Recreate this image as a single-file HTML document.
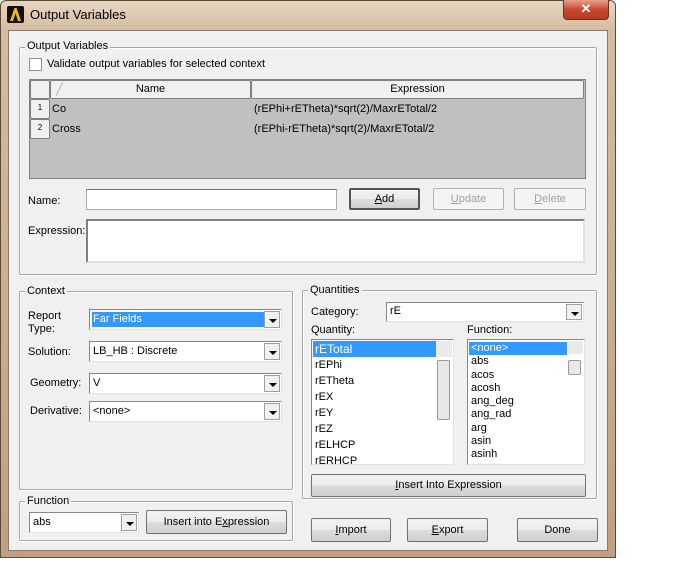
<!DOCTYPE html>
<html><head><style>
*{box-sizing:border-box}
body{margin:0;width:697px;height:561px;background:#fff;position:relative;overflow:hidden;font-family:"Liberation Sans",sans-serif;font-size:11px;color:#000}
.a{position:absolute}
.frame{left:0;top:0;width:616px;height:558px;border:1px solid #5a4a3a;border-radius:6px 6px 0 0;background:linear-gradient(180deg,#e6d6c2 0,#d4bca0 30px,#c0a080 100%)}
.client{left:8px;top:30px;width:600px;height:521px;background:#f0f0f0;border:1px solid #8a7a6a}
.grp{border:1px solid #a8a8a8;border-radius:2px;box-shadow:1px 1px 0 #fff,inset 1px 1px 0 #fff}
.lg{background:#f0f0f0;padding:0 2px;font-size:11px}
.btn{border:1px solid #707070;border-radius:2px;background:linear-gradient(#f2f2f2,#ebebeb 50%,#dddddd 50%,#cfcfcf);text-align:center;font-size:11px}
.dis{color:#a0a0a0;border-color:#adb2b5;background:#f4f4f4}
.inp{background:#fff;border:1px solid #abadb3;border-top-color:#707070}
.combo{background:#fff;border:1px solid #828790;border-right-color:#e3e3e3;border-bottom-color:#e3e3e3}
.arr{position:absolute;right:1px;top:1px;bottom:1px;width:16px;background:#f0f0f0;border:1px solid #a0a0a0}
.arr:after{content:"";position:absolute;left:4px;top:7px;border:4px solid transparent;border-top:4px solid #000;border-bottom:0}
.u{text-decoration:underline}
.lst div{height:16px;line-height:16px;padding-left:2px;font-size:11px}
.lst2 div{height:13.3px;line-height:13px;padding-left:2px;font-size:11px}
</style></head><body>
<div class="a frame"></div>
<div class="a" style="left:563px;top:0;width:46px;height:20px;background:linear-gradient(#e8a090,#c74a30 50%,#b83a20);border:1px solid #6a3020;border-top:0;border-radius:0 0 4px 4px;color:#fff;text-align:center;font-weight:bold;font-size:13px;line-height:18px">✕</div>
<svg class="a" style="left:7px;top:6px" width="17" height="17"><rect width="17" height="17" rx="2" fill="#111"/><path d="M3 15 L7.5 2 L9.5 2 L14 15 L11 15 L8.5 7 L6 15Z" fill="#f5c000"/></svg>
<div class="a" style="left:30px;top:7px;font-size:13px">Output Variables</div>
<div class="a client"></div>

<div class="a grp" style="left:19px;top:47px;width:578px;height:228px"></div>
<div class="a lg" style="left:25px;top:40px">Output Variables</div>
<div class="a inp" style="left:29px;top:58px;width:13px;height:13px;border-color:#8e8f8f"></div>
<div class="a" style="left:47px;top:58px">Validate output variables for selected context</div>
<div class="a" style="left:29px;top:79px;width:557px;height:100px;background:#c0c0c0;border:1px solid #808080"></div>
<div class="a btn" style="left:30px;top:80px;width:20px;height:19px;border-color:#808080;background:#f0f0f0"></div>
<div class="a btn" style="left:50px;top:80px;width:201px;height:19px;line-height:17px;border-color:#808080;background:#f0f0f0">Name</div>
<div class="a" style="left:56px;top:83px;color:#aaa">╱</div>
<div class="a btn" style="left:251px;top:80px;width:333px;height:19px;line-height:17px;border-color:#808080;background:#f0f0f0">Expression</div>
<div class="a btn" style="left:30px;top:99px;width:20px;height:20px;font-size:8px;line-height:16px;background:#f0f0f0;border-color:#808080">1</div>
<div class="a btn" style="left:30px;top:119px;width:20px;height:20px;font-size:8px;line-height:16px;background:#f0f0f0;border-color:#808080">2</div>
<div class="a" style="left:52px;top:103px">Co</div>
<div class="a" style="left:52px;top:123px">Cross</div>
<div class="a" style="left:254px;top:103px">(rEPhi+rETheta)*sqrt(2)/MaxrETotal/2</div>
<div class="a" style="left:254px;top:123px">(rEPhi-rETheta)*sqrt(2)/MaxrETotal/2</div>

<div class="a" style="left:28px;top:195px">Name:</div>
<div class="a inp" style="left:86px;top:189px;width:251px;height:21px"></div>
<div class="a btn" style="left:349px;top:188px;width:71px;height:22px;line-height:19px;border:2px solid #555"><span class="u">A</span>dd</div>
<div class="a btn dis" style="left:433px;top:188px;width:71px;height:22px;line-height:20px"><span class="u">U</span>pdate</div>
<div class="a btn dis" style="left:514px;top:188px;width:72px;height:22px;line-height:20px"><span class="u">D</span>elete</div>
<div class="a" style="left:28px;top:225px">Expression:</div>
<div class="a inp" style="left:86px;top:219px;width:499px;height:44px;border:2px solid;border-color:#808080 #e0e0e0 #e0e0e0 #808080"></div>

<div class="a grp" style="left:19px;top:291px;width:274px;height:199px"></div>
<div class="a lg" style="left:25px;top:285px">Context</div>
<div class="a" style="left:28px;top:310px;line-height:13px">Report<br>Type:</div>
<div class="a combo" style="left:89px;top:309px;width:193px;height:21px"><div class="a" style="left:2px;top:2px;width:172px;height:15px;background:#3399ff;color:#fff;padding-left:1px;line-height:15px">Far Fields</div><div class="arr"></div></div>
<div class="a" style="left:28px;top:346px">Solution:</div>
<div class="a combo" style="left:89px;top:341px;width:193px;height:21px;padding:3px 3px">LB_HB : Discrete<div class="arr"></div></div>
<div class="a" style="left:30px;top:377px">Geometry:</div>
<div class="a combo" style="left:89px;top:373px;width:193px;height:21px;padding:3px 3px">V<div class="arr"></div></div>
<div class="a" style="left:30px;top:405px">Derivative:</div>
<div class="a combo" style="left:89px;top:401px;width:193px;height:21px;padding:3px 3px">&lt;none&gt;<div class="arr"></div></div>

<div class="a grp" style="left:19px;top:501px;width:274px;height:40px"></div>
<div class="a lg" style="left:25px;top:495px">Function</div>
<div class="a combo" style="left:29px;top:512px;width:110px;height:21px;padding:3px 3px">abs<div class="arr"></div></div>
<div class="a btn" style="left:146px;top:510px;width:141px;height:24px;line-height:22px">Insert into E<span class="u">x</span>pression</div>

<div class="a grp" style="left:302px;top:290px;width:295px;height:209px"></div>
<div class="a lg" style="left:308px;top:284px">Quantities</div>
<div class="a" style="left:311px;top:306px">Category:</div>
<div class="a combo" style="left:386px;top:302px;width:198px;height:20px;padding:2px 3px">rE<div class="arr"></div></div>
<div class="a" style="left:311px;top:324px">Quantity:</div>
<div class="a" style="left:467px;top:324px">Function:</div>
<div class="a combo lst" style="left:311px;top:339px;width:143px;height:126px;overflow:hidden;padding:1px">
<div style="background:#3399ff;color:#fff;width:123px;font-size:12px">rETotal</div><div>rEPhi</div><div>rETheta</div><div>rEX</div><div>rEY</div><div>rEZ</div><div>rELHCP</div><div>rERHCP</div>
<div class="a" style="right:1px;top:1px;width:16px;bottom:1px;background:#eaeaea"><div class="a" style="left:1px;top:19px;width:13px;height:60px;border:1px solid #999;border-radius:2px;background:#e8e8e8;padding:0"></div></div></div>
<div class="a combo lst2" style="left:467px;top:339px;width:118px;height:126px;overflow:hidden;padding:2px 1px">
<div style="background:#3399ff;color:#fff;width:98px">&lt;none&gt;</div><div>abs</div><div>acos</div><div>acosh</div><div>ang_deg</div><div>ang_rad</div><div>arg</div><div>asin</div><div>asinh</div><div>atan</div>
<div class="a" style="right:1px;top:1px;width:16px;bottom:1px;background:#eaeaea"><div class="a" style="left:1px;top:19px;width:13px;height:15px;border:1px solid #999;border-radius:2px;background:#e8e8e8;padding:0"></div></div></div>
<div class="a btn" style="left:311px;top:474px;width:275px;height:23px;line-height:21px"><span class="u">I</span>nsert Into Expression</div>

<div class="a btn" style="left:311px;top:518px;width:80px;height:24px;line-height:22px"><span class="u">I</span>mport</div>
<div class="a btn" style="left:407px;top:518px;width:81px;height:24px;line-height:22px"><span class="u">E</span>xport</div>
<div class="a btn" style="left:517px;top:518px;width:81px;height:24px;line-height:22px">Done</div>
</body></html>
